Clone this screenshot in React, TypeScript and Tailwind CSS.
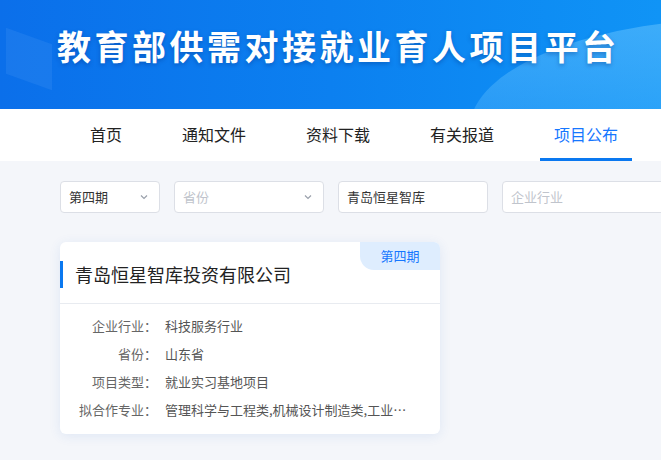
import React from 'react';

const font = { fontFamily: '"Noto Sans CJK SC", "Noto Sans", sans-serif' };

const navItems = ['首页', '通知文件', '资料下载', '有关报道', '项目公布'];

const rows = [
  { label: '企业行业：', value: '科技服务行业' },
  { label: '省份：', value: '山东省' },
  { label: '项目类型：', value: '就业实习基地项目' },
  { label: '拟合作专业：', value: '管理科学与工程类,机械设计制造类,工业工程类,电子信息类' },
];

const Chevron = () => (
  <svg width="10" height="10" viewBox="0 0 10 10" fill="none" stroke="#9aa0ab" strokeWidth="1.2">
    <path d="M2 3.5 L5 6.5 L8 3.5" />
  </svg>
);

export default function App() {
  return (
    <div className="w-[661px] h-[460px] overflow-hidden bg-[#f4f6fa]" style={font}>
      {/* Banner */}
      <div className="relative h-[109px] overflow-hidden bg-gradient-to-r from-[#0b6fea] via-[#0c80f0] to-[#1094f6]">
        <div className="absolute left-[470px] top-[18px] w-[560px] h-[220px] rounded-[50%] bg-gradient-to-b from-[#6cc6ff]/50 to-[#1a9bf8]/0" />
        <div className="absolute left-[6px] top-[36px] w-[46px] h-[46px] bg-[#3a90f2]/30 skew-y-[20deg]" />
        <div className="relative flex items-center h-full pl-[57px] pb-[18px]">
          <h1 className="text-white font-bold text-[34px] tracking-[3.5px] leading-none [text-shadow:0_2px_4px_rgba(0,40,120,0.35)]">
            教育部供需对接就业育人项目平台
          </h1>
        </div>
      </div>

      {/* Nav */}
      <div className="h-[52px] bg-white flex pl-[76px] gap-8">
        {navItems.map((item, i) => (
          <div
            key={item}
            className={`relative px-[14px] flex items-center text-[16px] pb-[2px] ${
              i === navItems.length - 1 ? 'text-[#1677ff]' : 'text-[#222]'
            }`}
          >
            {item}
            {i === navItems.length - 1 && (
              <div className="absolute left-0 right-0 bottom-0 h-[3px] bg-[#0a78f0]" />
            )}
          </div>
        ))}
      </div>

      {/* Filters */}
      <div className="flex gap-[14px] pl-[60px] pt-[20px]">
        <div className="w-[100px] shrink-0 h-[32px] bg-white border border-[#dcdfe6] rounded-[4px] flex items-center justify-between pl-[8px] pr-[10px] text-[13px] text-[#333]">
          <span>第四期</span>
          <Chevron />
        </div>
        <div className="w-[150px] shrink-0 h-[32px] bg-white border border-[#dcdfe6] rounded-[4px] flex items-center justify-between pl-[8px] pr-[10px] text-[13px] text-[#c0c4cc]">
          <span>省份</span>
          <Chevron />
        </div>
        <div className="w-[150px] shrink-0 h-[32px] bg-white border border-[#dcdfe6] rounded-[4px] flex items-center pl-[8px] text-[13px] text-[#333]">
          青岛恒星智库
        </div>
        <div className="w-[170px] shrink-0 h-[32px] bg-white border border-[#dcdfe6] rounded-[4px] flex items-center pl-[8px] text-[13px] text-[#c0c4cc]">
          企业行业
        </div>
      </div>

      {/* Card */}
      <div className="ml-[60px] mt-[29px] w-[380px] bg-white rounded-[6px] shadow-[0_2px_12px_rgba(40,100,200,0.10)] relative overflow-hidden">
        <div className="absolute right-0 top-0 w-[80px] h-[28px] bg-[#deedfe] rounded-bl-[14px] flex items-center justify-center text-[13px] text-[#1677ff]">
          第四期
        </div>
        <div className="pt-[19px] pb-[15px] flex items-center">
          <div className="w-[3px] h-[27px] bg-[#0a78f0]" />
          <div className="pl-[12px] text-[18px] text-[#222] leading-[27px]">青岛恒星智库投资有限公司</div>
        </div>
        <div className="h-px bg-[#e8ebf0]" />
        <div className="pt-[8px] pb-[10px] pl-[17px] pr-[30px] text-[13px]">
          {rows.map((r) => (
            <div key={r.label} className="flex h-[28px] items-center">
              <div className="w-[80px] shrink-0 text-right text-[#666]">{r.label}</div>
              <div className="pl-[8px] text-[#555] truncate">{r.value}</div>
            </div>
          ))}
        </div>
      </div>
    </div>
  );
}
